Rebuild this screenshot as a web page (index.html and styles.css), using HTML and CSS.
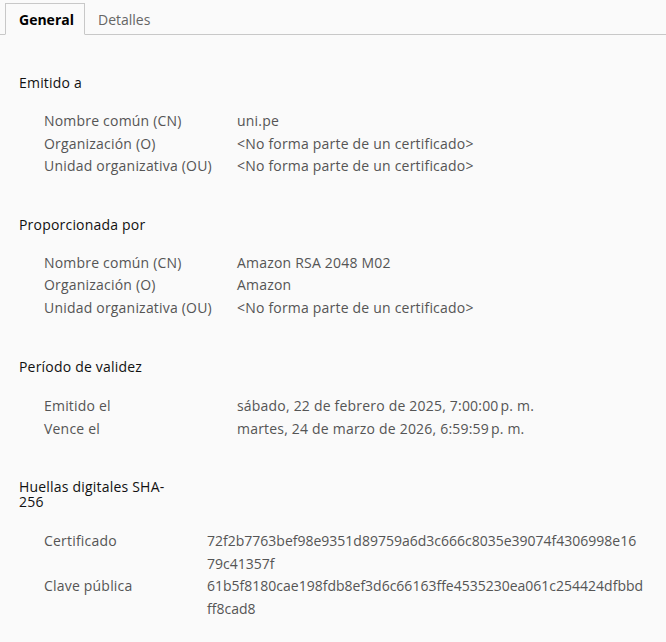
FILE: index.html
```html
<!DOCTYPE html>
<html lang="es">
<head>
<meta charset="utf-8">
<link rel="stylesheet" href="styles.css">
</head>
<body>
<div class="tabs">
  <div class="tab active">General</div>
  <div class="tab">Detalles</div>
</div>
<div class="content">
  <section class="sec">
    <h2 class="title">Emitido a</h2>
    <div class="grid g1">
      <div class="lab">Nombre común (CN)</div><div class="val">uni.pe</div>
      <div class="lab">Organización (O)</div><div class="val">&lt;No forma parte de un certificado&gt;</div>
      <div class="lab">Unidad organizativa (OU)</div><div class="val">&lt;No forma parte de un certificado&gt;</div>
    </div>
  </section>
  <section class="sec">
    <h2 class="title">Proporcionada por</h2>
    <div class="grid g1">
      <div class="lab">Nombre común (CN)</div><div class="val">Amazon RSA 2048 M02</div>
      <div class="lab">Organización (O)</div><div class="val">Amazon</div>
      <div class="lab">Unidad organizativa (OU)</div><div class="val">&lt;No forma parte de un certificado&gt;</div>
    </div>
  </section>
  <section class="sec sec-validity">
    <h2 class="title">Período de validez</h2>
    <div class="grid g1 g-validity">
      <div class="lab">Emitido el</div><div class="val">sábado, 22 de febrero de 2025, 7:00:00&#8239;p.&nbsp;m.</div>
      <div class="lab">Vence el</div><div class="val">martes, 24 de marzo de 2026, 6:59:59&#8239;p.&nbsp;m.</div>
    </div>
  </section>
  <section class="sec sec-hash">
    <h2 class="title narrow">Huellas digitales SHA-256</h2>
    <div class="grid g2">
      <div class="lab">Certificado</div><div class="val hash">72f2b7763bef98e9351d89759a6d3c666c8035e39074f4306998e16<wbr>79c41357f</div>
      <div class="lab">Clave pública</div><div class="val hash">61b5f8180cae198fdb8ef3d6c66163ffe4535230ea061c254424dfbbd<wbr>ff8cad8</div>
    </div>
  </section>
</div>
</body>
</html>
```
FILE: styles.css
```css
html, body {
  margin: 0;
  padding: 0;
  background: #fafafa;
}
body {
  font-family: "Open Sans", "Liberation Sans", Arial, sans-serif;
  font-size: 14px;
  color: #555;
  width: 666px;
  height: 642px;
  overflow: hidden;
  letter-spacing: 0.2px;
}
.tabs {
  display: flex;
  height: 34px;
  border-bottom: 1px solid #c8c8c8;
  padding-left: 5px;
  align-items: flex-end;
}
.tab {
  box-sizing: border-box;
  height: 31px;
  line-height: 31px;
  padding: 0 14px 0 13px;
  color: #666;
  margin-bottom: -1px;
  letter-spacing: 0;
}
.tab.active {
  width: 80px;
  height: 32px;
  border: 1px solid #c8c8c8;
  border-bottom: 1px solid #fafafa;
  color: #000;
  font-weight: bold;
  line-height: 31px;
}
.content {
  padding: 0 19px;
}
.sec {
  margin-top: 39px;
}
.sec:first-child {
  margin-top: 40px;
}
.sec-validity {
  margin-top: 40px;
}
.title {
  margin: 0;
  font-size: 14px;
  font-weight: normal;
  color: #111;
  line-height: 16px;
}
.title.narrow {
  width: 152px;
  line-height: 15px;
}
.sec-hash {
  margin-top: 39px;
}
.grid {
  display: grid;
  margin-top: 19px;
  padding-left: 25px;
  row-gap: 0;
}
.g-validity {
  margin-top: 20px;
}
.g1 {
  grid-template-columns: 193px 1fr;
}
.g2 {
  grid-template-columns: 163px 440px;
  margin-top: 21px;
}
.lab, .val {
  line-height: 22.5px;
  white-space: nowrap;
}
.hash {
  white-space: normal;
  letter-spacing: 0;
}
```
